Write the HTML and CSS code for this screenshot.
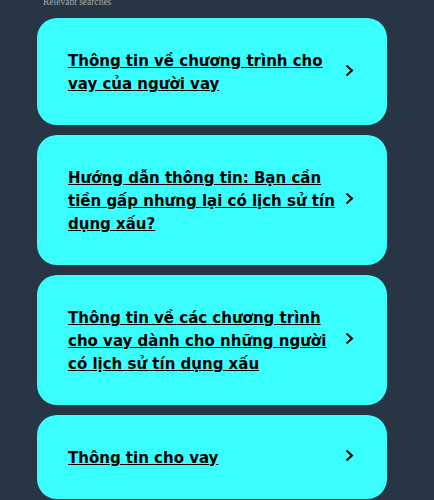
FILE: index.html
```html
<!DOCTYPE html>
<html lang="vi">
<head>
    <meta charset="UTF-8">
    <title>Relevant searches</title>
    <link rel="stylesheet" href="styles.css">
</head>
<body>
    <div class="related">
        <div class="label">Relevant searches</div>
        <a class="card" href="#">
            <span class="title">Thông tin về chương trình cho vay của người vay</span>
            <svg class="chev" width="9" height="13" viewBox="0 0 9 13"><polyline points="1.5,1.5 7,6.5 1.5,11.5" fill="none" stroke="#000" stroke-width="2"/></svg>
        </a>
        <a class="card" href="#">
            <span class="title">Hướng dẫn thông tin: Bạn cần tiền gấp nhưng lại có lịch sử tín dụng xấu?</span>
            <svg class="chev" width="9" height="13" viewBox="0 0 9 13"><polyline points="1.5,1.5 7,6.5 1.5,11.5" fill="none" stroke="#000" stroke-width="2"/></svg>
        </a>
        <a class="card" href="#">
            <span class="title">Thông tin về các chương trình cho vay dành cho những người có lịch sử tín dụng xấu</span>
            <svg class="chev" width="9" height="13" viewBox="0 0 9 13"><polyline points="1.5,1.5 7,6.5 1.5,11.5" fill="none" stroke="#000" stroke-width="2"/></svg>
        </a>
        <a class="card" href="#">
            <span class="title">Thông tin cho vay</span>
            <svg class="chev" width="9" height="13" viewBox="0 0 9 13"><polyline points="1.5,1.5 7,6.5 1.5,11.5" fill="none" stroke="#000" stroke-width="2"/></svg>
        </a>
    </div>
</body>
</html>
```

FILE: styles.css
```css
body {
    margin: 0;
    background: #283545;
    font-family: "DejaVu Sans", Verdana, sans-serif;
}

.related {
    width: 350px;
    margin-left: 37px;
}

.label {
    margin: -3px 0 10px 6px;
    font-family: "Liberation Serif", serif;
    font-size: 9.5px;
    line-height: 11px;
    color: #a4abb3;
}

.card {
    display: flex;
    align-items: center;
    margin-bottom: 10px;
    padding: 32px 33px 29px 31px;
    background: #3afefe;
    border-radius: 20px;
    color: #000;
    text-decoration: none;
}

.title {
    flex: 1;
    max-width: 272px;
    font-size: 15px;
    font-weight: bold;
    line-height: 23px;
    text-decoration: underline;
}

.chev {
    margin-left: auto;
    margin-bottom: 6px;
}
```
